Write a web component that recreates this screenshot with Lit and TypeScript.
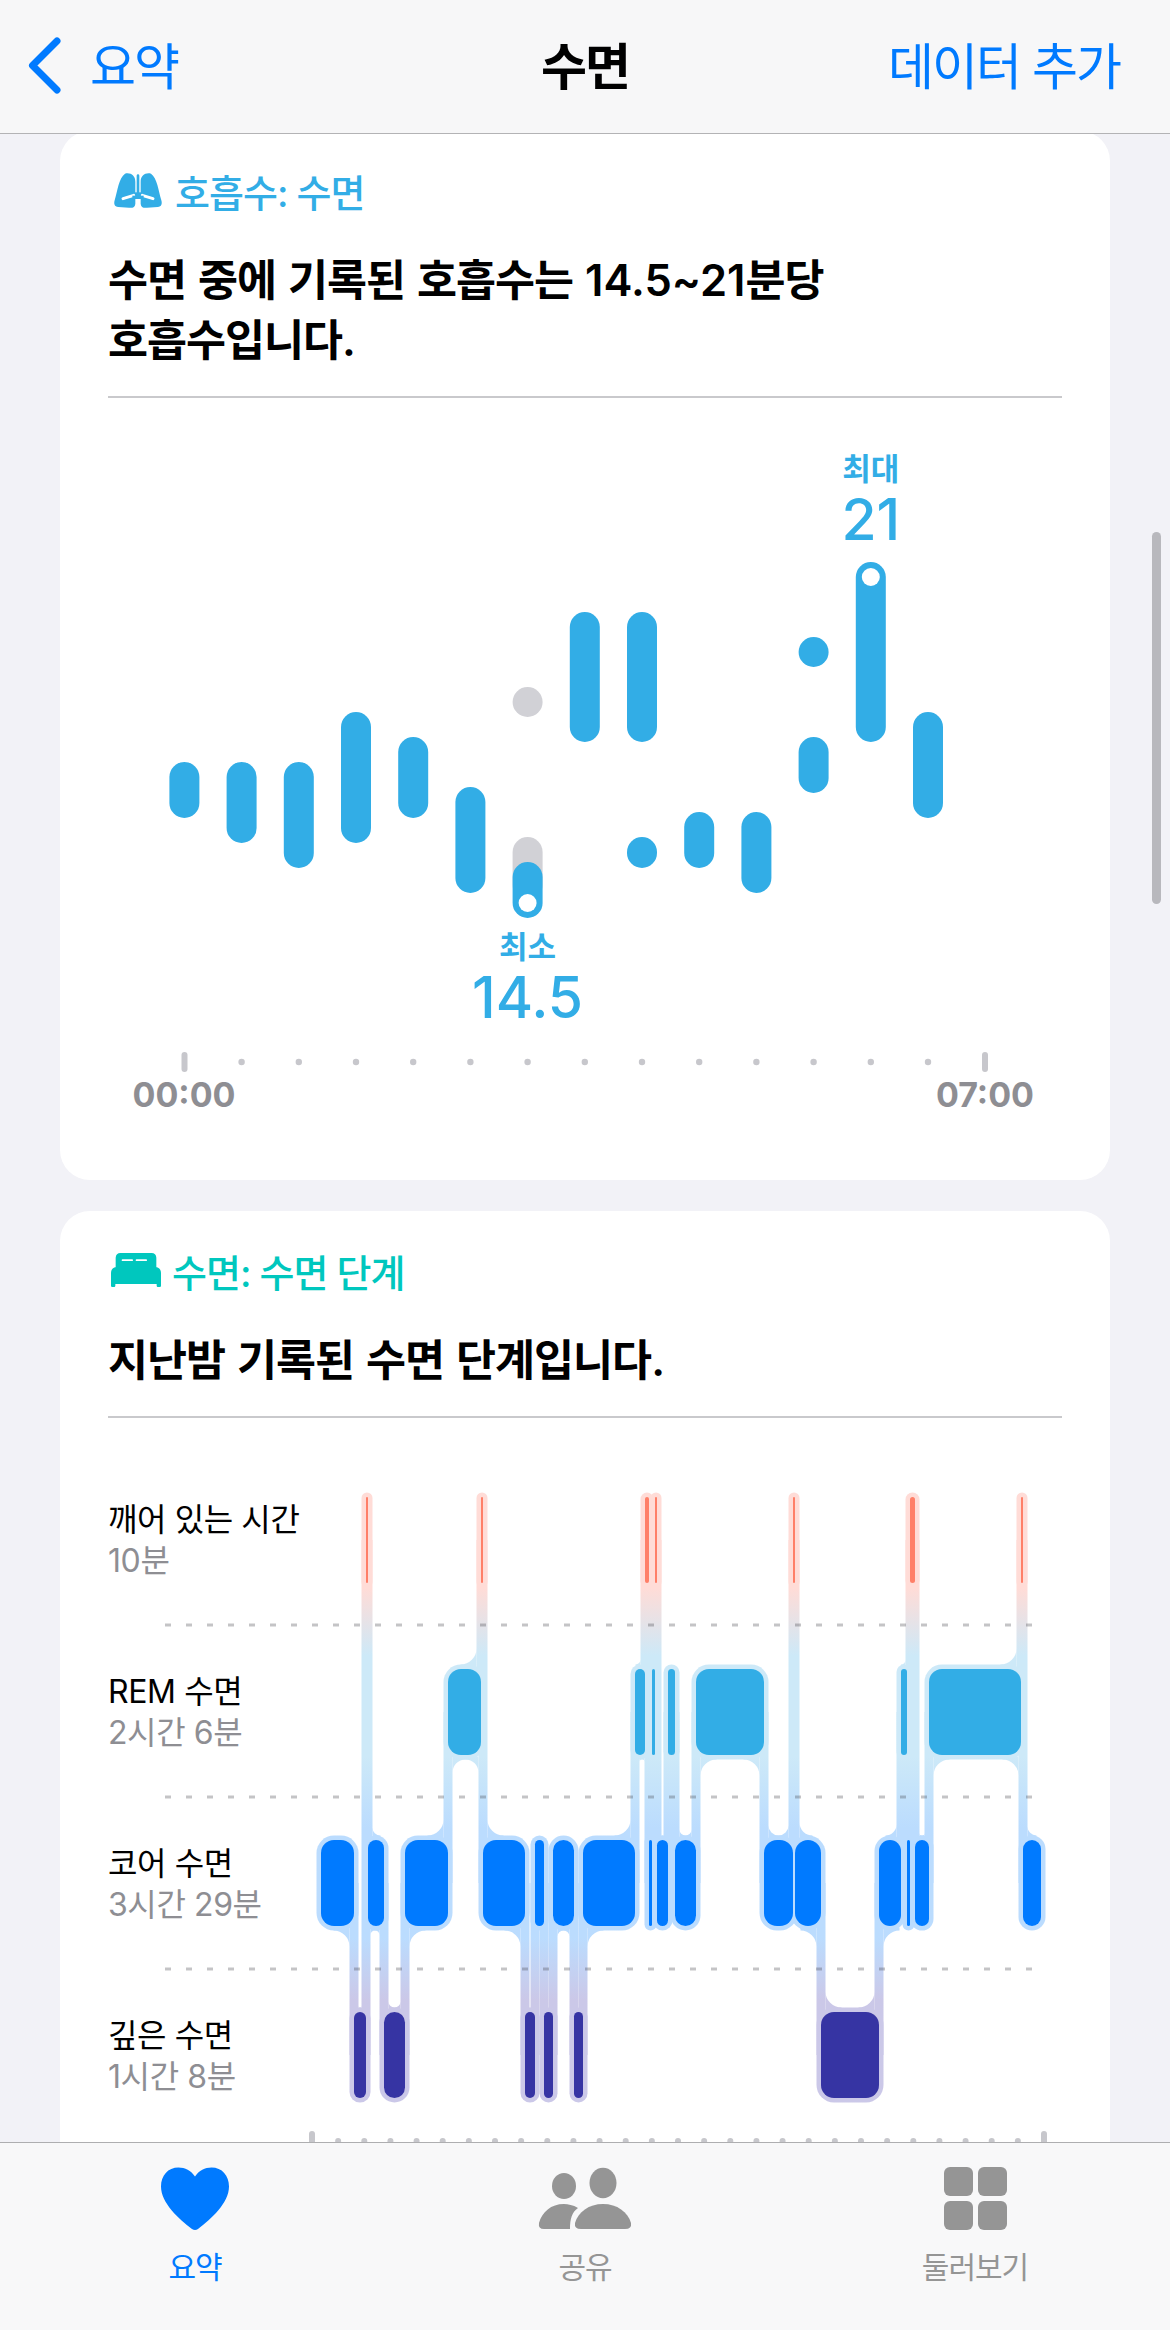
import { LitElement, html, css, svg } from "lit";
import { customElement } from "lit/decorators.js";

// ---- respiratory chart data (page coordinates) ----
const COL_X = 184.4;
const COL_STEP = 57.2;
type Bar = [number, number, number];
const BREATH: Bar[] = [
  [0, 762, 818], [1, 762, 843], [2, 762, 868], [3, 712, 843], [4, 737, 818],
  [5, 787, 893], [6, 862, 918], [7, 612, 742], [8, 612, 742], [8, 837, 868],
  [9, 812, 868], [10, 812, 893], [11, 637, 667], [11, 737, 793], [12, 562, 742],
  [13, 712, 818],
];
const BREATH_GREY: Bar[] = [[6, 687, 717], [6, 837, 900]];

// ---- sleep stage data ----
type Stage = "a" | "r" | "c" | "d";
const ROWS: Record<Stage, [number, number]> = {
  a: [1497, 1583],
  r: [1669, 1755],
  c: [1840, 1926],
  d: [2012, 2098],
};
const COLORS: Record<Stage, string> = { a: "#ff7f68", r: "#32ade6", c: "#007aff", d: "#3634a3" };
const STAGES: [number, Stage][] = [
  [321, "c"], [354, "d"], [366, "a"], [368, "c"], [384, "d"], [405, "c"], [448, "r"], [481, "a"],
  [483, "c"], [525, "d"], [535, "c"], [544, "d"], [553, "c"], [574, "d"], [583, "c"], [635, "r"],
  [645, "a"], [649, "c"], [652, "r"], [655, "a"], [657, "c"], [668, "r"], [675, "c"], [696, "r"],
  [764, "c"], [793, "a"], [795, "c"], [821, "d"], [879, "c"], [901, "r"], [907, "c"], [910, "a"],
  [915, "c"], [929, "r"], [1021, "a"], [1023, "c"],
];
const END_X = 1041;
const PAD = 4.5;

interface Seg { x0: number; x1: number; stage: Stage; y0: number; y1: number }
const SEGS: Seg[] = STAGES.map(([x0, stage], i) => ({
  x0,
  x1: i + 1 < STAGES.length ? STAGES[i + 1][0] : END_X,
  stage,
  y0: ROWS[stage][0],
  y1: ROWS[stage][1],
}));

interface Link { x0: number; x1: number; top: number; bottom: number }
const LINKS: Link[] = [];
SEGS.forEach((s, i) => {
  const n = SEGS[i + 1];
  if (!n) return;
  const a = (s.y0 + s.y1) / 2;
  const b = (n.y0 + n.y1) / 2;
  LINKS.push({ x0: s.x1 - PAD, x1: s.x1 + PAD, top: Math.min(a, b), bottom: Math.max(a, b) });
});

function merge(list: [number, number][]) {
  const sorted = [...list].sort((p, q) => p[0] - q[0]);
  const out: [number, number][] = [];
  for (const [a, b] of sorted) {
    const last = out[out.length - 1];
    if (last && a <= last[1]) last[1] = Math.max(last[1], b);
    else out.push([a, b]);
  }
  return out;
}

// concave corner where a link leaves a halo; dir is -1 going up, +1 going down
function fillet(x: number, y: number, r: number, dir: number, left: boolean) {
  const side = left ? 1 : -1;
  const sweep = dir === -1 === left ? 1 : 0;
  return `M${x + side * r} ${y}A${r} ${r} 0 0 ${sweep} ${x} ${y + dir * r}L${x} ${y - dir * 3}L${x + side * r} ${y - dir * 3}Z`;
}

function buildFillets() {
  let d = "";
  for (const stage of ["a", "r", "c", "d"] as Stage[]) {
    const halos = merge(SEGS.filter((s) => s.stage === stage).map((s) => [s.x0 - PAD, s.x1 + PAD] as [number, number]));
    for (const dir of [-1, 1]) {
      const y = dir === -1 ? ROWS[stage][0] - PAD : ROWS[stage][1] + PAD;
      const cross = LINKS.filter((l) => (dir === -1 ? l.top < y && l.bottom >= y : l.bottom > y && l.top <= y));
      for (const [a, b] of halos) {
        const cover = merge(cross.filter((l) => l.x1 > a && l.x0 < b).map((l) => [l.x0, l.x1] as [number, number]));
        let pos = a;
        let prevLink = false;
        for (const [c0, c1] of [...cover, [b, b] as [number, number]]) {
          const isLink = c1 > c0;
          if (c0 - pos > 0.5) {
            const r = Math.min(16, (c0 - pos) / 2);
            if (prevLink) d += fillet(pos, y, r, dir, true);
            if (isLink) d += fillet(c0, y, r, dir, false);
          }
          pos = Math.max(pos, c1);
          prevLink = isLink;
        }
      }
    }
  }
  return d;
}
const FILLETS = buildFillets();

const DASH_ROWS = [1625, 1797, 1969];
const AXIS_DOTS = Array.from({ length: 27 }, (_, i) => 312 + (i + 1) * (732 / 28));

@customElement("app-root")
export class AppRoot extends LitElement {
  static styles = css`
    :host {
      display: block;
      width: 1170px;
      height: 2330px;
      position: relative;
      overflow: hidden;
      background: #f2f2f7;
      font-family: Inter, "Noto Sans CJK KR", sans-serif;
    }
    .page {
      display: flex;
      flex-direction: column;
      height: 100%;
    }
    .nav {
      height: 134px;
      box-sizing: border-box;
      flex: none;
      display: grid;
      grid-template-columns: 1fr auto 1fr;
      align-items: center;
      padding: 0 50px 7px 50px;
      background: #f7f7f8;
      border-bottom: 1px solid #b3b3b5;
      position: relative;
      z-index: 2;
      font-size: 50px;
      letter-spacing: -2px;
      color: #007aff;
    }
    .back {
      display: flex;
      align-items: center;
      gap: 29px;
      margin-left: -22px;
    }
    .back svg {
      display: block;
      margin-top: 6px;
    }
    .nav-title {
      color: #000;
      font-weight: 600;
    }
    .add {
      text-align: right;
    }
    .main {
      flex: 1;
      min-height: 0;
      overflow: hidden;
      padding: 0 60px;
      display: flex;
      flex-direction: column;
      gap: 31px;
    }
    .card {
      background: #fff;
      border-radius: 30px;
      padding: 35px 48px 65px;
      flex: none;
    }
    .card.first {
      margin-top: -3px;
      height: 1049px;
      box-sizing: border-box;
    }
    .head {
      display: flex;
      align-items: center;
      gap: 8px;
      font-size: 38px;
      font-weight: 500;
      letter-spacing: -1px;
      height: 48px;
    }
    .head svg {
      display: block;
      margin-left: 3px;
    }
    .head.breath {
      color: #32ade6;
    }
    .head.sleep {
      color: #00c7be;
      gap: 11px;
    }
    .title {
      font-size: 43.5px;
      font-weight: 600;
      line-height: 60px;
      letter-spacing: -1px;
      word-spacing: 2px;
      color: #000;
      margin-top: 36px;
    }
    .digits {
      letter-spacing: 0;
    }
    .rule {
      height: 2px;
      background: #c9c9cc;
      margin-top: 26px;
    }
    .chart {
      display: block;
    }
    .bar {
      fill: #32ade6;
    }
    .bar-grey {
      fill: #d1d1d6;
    }
    .hole {
      fill: #fff;
    }
    .tick {
      fill: #c7c7cc;
    }
    .cap {
      fill: #32ade6;
      font-size: 31px;
      font-weight: 600;
      text-anchor: middle;
    }
    .num {
      fill: #32ade6;
      font-size: 57px;
      font-weight: 500;
      text-anchor: middle;
    }
    .time {
      fill: #8e8e93;
      font-size: 34px;
      font-weight: 700;
      text-anchor: middle;
    }
    .stages {
      display: grid;
    }
    .stages > * {
      grid-area: 1 / 1;
    }
    .labels {
      padding-top: 36px;
      display: grid;
      grid-auto-rows: 172px;
      align-content: start;
    }
    .label {
      display: flex;
      flex-direction: column;
      justify-content: center;
      gap: 1px;
      font-size: 32px;
      line-height: 40px;
      letter-spacing: -0.4px;
      color: #000;
      white-space: nowrap;
    }
    .label span {
      color: #8e8e93;
    }
    .dash {
      stroke: #3c3c43;
      stroke-opacity: 0.3;
      stroke-width: 3;
      stroke-dasharray: 6 15;
    }
    .tabs {
      height: 188px;
      box-sizing: border-box;
      flex: none;
      display: flex;
      background: #f8f8f9;
      border-top: 1px solid #aeaeb0;
      position: relative;
      z-index: 2;
    }
    .tab {
      flex: 1;
      display: flex;
      flex-direction: column;
      align-items: center;
      padding-top: 24px;
      color: #959595;
      font-size: 30px;
      letter-spacing: -1px;
    }
    .tab.on {
      color: #007aff;
    }
    .tab svg {
      display: block;
      height: 64px;
    }
    .tab div {
      margin-top: 14px;
      line-height: 44px;
    }
    .scroll {
      position: absolute;
      left: 1152px;
      top: 532px;
      width: 9px;
      height: 372px;
      border-radius: 5px;
      background: #b8b8bd;
      z-index: 1;
    }
  `;

  breathChart() {
    const cx = (c: number) => COL_X + c * COL_STEP;
    const bar = (b: Bar, cls: string) =>
      svg`<rect class=${cls} x=${cx(b[0]) - 15} y=${b[1]} width="30" height=${b[2] - b[1]} rx="15"></rect>`;
    return html`<svg class="chart" width="954" height="717" viewBox="108 398 954 717">
      ${BREATH_GREY.map((b) => bar(b, "bar-grey"))}
      ${BREATH.map((b) => bar(b, "bar"))}
      <circle class="hole" cx=${cx(6)} cy="903" r="9"></circle>
      <circle class="hole" cx=${cx(12)} cy="577" r="9"></circle>
      <text class="cap" x=${cx(12)} y="480">최대</text>
      <text class="num" x=${cx(12)} y="540">21</text>
      <text class="cap" x=${cx(6)} y="958">최소</text>
      <text class="num" x=${cx(6)} y="1018">14.5</text>
      <rect class="tick" x="181.5" y="1052" width="6" height="20" rx="3"></rect>
      <rect class="tick" x="982" y="1052" width="6" height="20" rx="3"></rect>
      ${Array.from({ length: 13 }, (_, i) => svg`<circle class="tick" cx=${cx(i + 1)} cy="1062" r="3.2"></circle>`)}
      <text class="time" x="184" y="1107">00:00</text>
      <text class="time" x="985" y="1107">07:00</text>
    </svg>`;
  }

  stageChart() {
    return html`<svg class="chart" width="954" height="740" viewBox="108 1418 954 740">
      <defs>
        <linearGradient id="halo" gradientUnits="userSpaceOnUse" x1="0" y1="1490" x2="0" y2="2104">
          <stop offset="0.16" stop-color="#ffdcd7"></stop>
          <stop offset="0.27" stop-color="#cde9f8"></stop>
          <stop offset="0.435" stop-color="#cde9f8"></stop>
          <stop offset="0.55" stop-color="#bbdcfe"></stop>
          <stop offset="0.73" stop-color="#bbdcfe"></stop>
          <stop offset="0.83" stop-color="#cbc8e8"></stop>
        </linearGradient>
      </defs>
      <g fill="url(#halo)">
        ${SEGS.map((s) => {
          const w = s.x1 - s.x0;
          return svg`<rect x=${s.x0 - PAD} y=${s.y0 - PAD} width=${w + PAD * 2} height=${s.y1 - s.y0 + PAD * 2} rx=${Math.min(w / 2, 13) + PAD}></rect>`;
        })}
        ${LINKS.map((l) => svg`<rect x=${l.x0} y=${l.top} width=${l.x1 - l.x0} height=${l.bottom - l.top}></rect>`)}
        <path d=${FILLETS}></path>
      </g>
      ${SEGS.map((s) => {
        const w = s.x1 - s.x0;
        return svg`<rect fill=${COLORS[s.stage]} x=${s.x0} y=${s.y0} width=${w} height=${s.y1 - s.y0} rx=${Math.min(w / 2, 13)}></rect>`;
      })}
      ${DASH_ROWS.map((y) => svg`<line class="dash" x1="165" x2="1032" y1=${y} y2=${y}></line>`)}
      <rect class="tick" x="309" y="2131" width="6" height="24" rx="3"></rect>
      <rect class="tick" x="1041" y="2131" width="6" height="24" rx="3"></rect>
      ${AXIS_DOTS.map((x) => svg`<circle class="tick" cx=${x} cy="2141" r="3"></circle>`)}
    </svg>`;
  }

  render() {
    return html`
      <div class="page">
        <div class="nav">
          <div class="back">
            <svg width="33" height="58" viewBox="28 38 33 58">
              <path d="M57 42L32.5 66.5L57 91" fill="none" stroke="#007aff" stroke-width="7" stroke-linecap="round" stroke-linejoin="round"></path>
            </svg>
            <span>요약</span>
          </div>
          <div class="nav-title">수면</div>
          <div class="add">데이터 추가</div>
        </div>
        <div class="main">
          <div class="card first">
            <div class="head breath">
              <svg width="56" height="38" viewBox="36 20 168 114">
                <path fill="#32ade6" d="M78 28C95 24 109 34 109 52L109 118C109 128 100 132 90 130L58 128C46 128 44 118 47 108C55 80 60 40 78 28Z"></path>
                <path fill="#32ade6" d="M156 28C139 24 125 34 125 52L125 118C125 128 134 132 144 130L176 128C188 128 190 118 187 108C179 80 174 40 156 28Z"></path>
                <rect fill="#32ade6" x="107" y="84" width="20" height="20"></rect>
                <rect fill="#32ade6" x="113" y="30" width="8" height="66" rx="4"></rect>
                <path d="M72 103L104 93M162 103L130 93" fill="none" stroke="#fff" stroke-width="9" stroke-linecap="round"></path>
                <path d="M100 97H134" fill="none" stroke="#32ade6" stroke-width="6"></path>
              </svg>
              <span>호흡수: 수면</span>
            </div>
            <div class="title">수면 중에 기록된 호흡수는 <span class="digits">14.5~21</span>분당<br />호흡수입니다.</div>
            <div class="rule"></div>
            ${this.breathChart()}
          </div>
          <div class="card">
            <div class="head sleep">
              <svg width="50" height="34" viewBox="0 0 150 102">
                <path fill="#00c7be" d="M14 44V14C14 5 20 0 28 0H122C130 0 136 5 136 14V44Z"></path>
                <rect fill="#fff" x="32" y="19" width="34" height="5" rx="2.5"></rect>
                <rect fill="#fff" x="74" y="19" width="34" height="5" rx="2.5"></rect>
                <path fill="#00c7be" d="M16 42H134C144 42 150 50 150 60V98C150 100 148 102 146 102H141C139 102 137 100 137 98V93H13V98C13 100 11 102 9 102H4C2 102 0 100 0 98V60C0 50 6 42 16 42Z"></path>
              </svg>
              <span>수면: 수면 단계</span>
            </div>
            <div class="title">지난밤 기록된 수면 단계입니다.</div>
            <div class="rule"></div>
            <div class="stages">
              ${this.stageChart()}
              <div class="labels">
                <div class="label">깨어 있는 시간<span>10분</span></div>
                <div class="label">REM 수면<span>2시간 6분</span></div>
                <div class="label">코어 수면<span>3시간 29분</span></div>
                <div class="label">깊은 수면<span>1시간 8분</span></div>
              </div>
            </div>
          </div>
        </div>
        <div class="tabs">
          <div class="tab on">
            <svg width="68" viewBox="0 0 68 64">
              <path fill="#007aff" d="M34 9.5C30 3.5 24 .5 17.5 .5C7 .5 0 8.5 0 19.5C0 36 18 52 31 62C33 63.3 35 63.3 37 62C50 52 68 36 68 19.5C68 8.5 61 .5 50.5 .5C44 .5 38 3.5 34 9.5Z"></path>
            </svg>
            <div>요약</div>
          </div>
          <div class="tab">
            <svg width="94" viewBox="537 2167 94 64" fill="#959595">
              <ellipse cx="563" cy="2186" rx="12" ry="13"></ellipse>
              <ellipse cx="602" cy="2183" rx="13.5" ry="15.3"></ellipse>
              <path d="M580 2229H624Q631 2229 630 2223C627 2212 616 2204 602 2204C588 2204 577 2212 574 2223Q573 2229 580 2229Z"></path>
              <path d="M543 2229H569C569 2219 571 2212 577 2208C572 2205 567 2204 563 2204C550 2204 541 2212 538 2223Q537 2229 543 2229Z"></path>
            </svg>
            <div>공유</div>
          </div>
          <div class="tab">
            <svg width="63" viewBox="943 2167 63 64" fill="#959595">
              <rect x="943" y="2167" width="29" height="29" rx="6"></rect>
              <rect x="977" y="2167" width="29" height="29" rx="6"></rect>
              <rect x="943" y="2201" width="29" height="29" rx="6"></rect>
              <rect x="977" y="2201" width="29" height="29" rx="6"></rect>
            </svg>
            <div>둘러보기</div>
          </div>
        </div>
        <div class="scroll"></div>
      </div>
    `;
  }
}
